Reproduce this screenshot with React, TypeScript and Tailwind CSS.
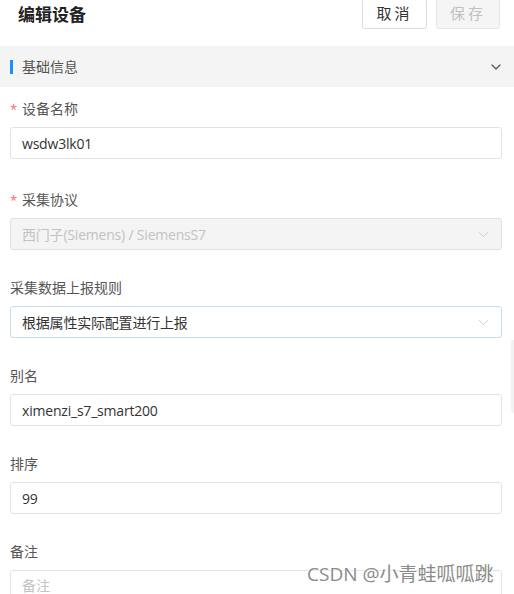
import { ChevronDown } from 'lucide-react';

const FONT = { fontFamily: '"Open Sans", "Noto Sans CJK SC", sans-serif' };

function Label({ text, required }: { text: string; required?: boolean }) {
  return (
    <div className="h-5 mb-2 flex items-center text-[14px] leading-5 text-[#555]">
      {required && <span className="w-3 text-[#f56c6c] text-[13px]">*</span>}
      <span>{text}</span>
    </div>
  );
}

function Field({ value, border = 'border-[#e2e2e2]', disabled, select, placeholder }: {
  value?: string; border?: string; disabled?: boolean; select?: boolean; placeholder?: boolean;
}) {
  return (
    <div
      className={`h-8 border ${border} rounded-[3px] flex items-center justify-between pl-[11px] pr-[9px] text-[14px] ${
        disabled ? 'bg-[#f4f4f4] text-[#c2c2c2]' : placeholder ? 'bg-white text-[#c4c4c4]' : 'bg-white text-[#333]'
      }`}
    >
      <span className="truncate tracking-[-0.2px]">{value}</span>
      {select && <ChevronDown size={17} strokeWidth={1.2} className="text-[#c4c4c4]" />}
    </div>
  );
}

export default function App() {
  return (
    <div className="relative w-[514px] h-[594px] overflow-hidden bg-white" style={FONT}>
      {/* header */}
      <div className="h-[29px] flex items-start justify-between pl-[18px] pr-[14px]">
        <h1 className="mt-[3px] text-[17px] font-bold text-[#222] leading-6">编辑设备</h1>
        <div className="flex gap-[9px] -mt-[2px]">
          <button className="w-[65px] h-[31px] border border-[#dcdcdc] rounded-[3px] bg-white text-[15px] text-[#333] tracking-[3px]">
            取消
          </button>
          <button className="w-[64px] h-[31px] border border-[#e6e6e6] rounded-[3px] bg-[#f5f5f5] text-[15px] text-[#c0c0c0] tracking-[3px]">
            保存
          </button>
        </div>
      </div>

      {/* section */}
      <div className="mt-[17px] h-[41px] bg-[#f4f4f4] flex items-center justify-between pl-[10px] pr-[10px]">
        <div className="flex items-center">
          <span className="w-[3px] h-[14px] bg-[#1890ff] mr-[9px]" />
          <span className="text-[14px] text-[#555]">基础信息</span>
        </div>
        <ChevronDown size={16} strokeWidth={1.8} className="text-[#555]" />
      </div>

      {/* form */}
      <div className="pl-[10px] pr-[12px] pt-[12px]">
        <Label text="设备名称" required />
        <Field value="wsdw3lk01" />
        <div className="h-[31px]" />
        <Label text="采集协议" required />
        <Field value="西门子(Siemens) / SiemensS7" disabled select />
        <div className="h-[28px]" />
        <Label text="采集数据上报规则" />
        <Field value="根据属性实际配置进行上报" select border="border-[#c5dcf3]" />
        <div className="h-[28px]" />
        <Label text="别名" />
        <Field value="ximenzi_s7_smart200" />
        <div className="h-[28px]" />
        <Label text="排序" />
        <Field value="99" />
        <div className="h-[28px]" />
        <Label text="备注" />
        <div className="h-[60px] border border-[#e2e2e2] rounded-[3px] pl-[11px] pt-[4px] text-[14px] text-[#c4c4c4]">
          备注
        </div>
      </div>

      {/* scroll shadow */}
      <div className="absolute right-0 top-[340px] w-[3px] h-[73px] bg-[#f2f2f2] rounded-l" />

      {/* watermark */}
      <div
        className="absolute left-[307px] top-[562px] text-[19px] text-[#8a8a8a] leading-6 whitespace-nowrap"
        style={{ textShadow: '0 0 2px #fff, 0 0 2px #fff, 0 0 3px #fff' }}
      >
        CSDN @小青蛙呱呱跳
      </div>
    </div>
  );
}
